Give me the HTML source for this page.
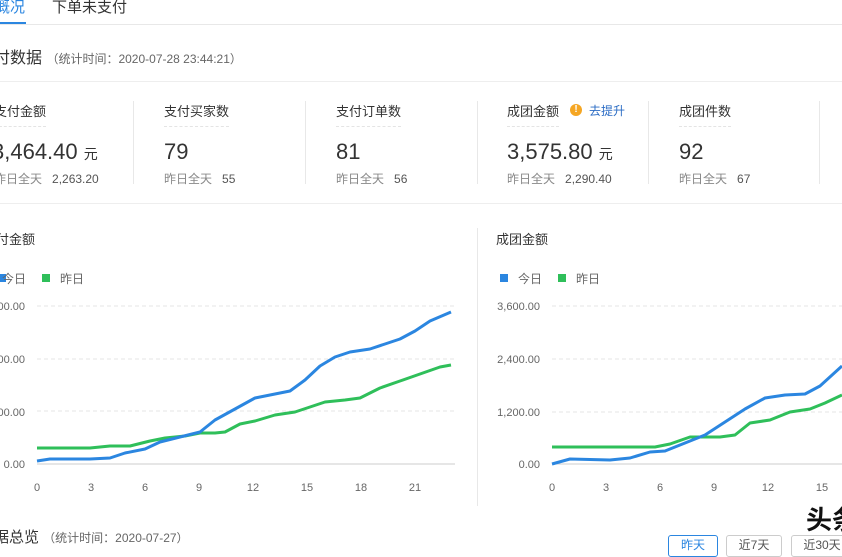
<!DOCTYPE html>
<html><head><meta charset="utf-8"><style>
body{margin:0;width:842px;height:547px;overflow:hidden;background:#fff;font-family:"Liberation Sans","Noto Sans CJK SC",sans-serif;color:#333;position:relative}
.a{position:absolute;white-space:nowrap}
.lbl{font-size:13px;color:#333;border-bottom:1px dashed #e4e4e4;padding-bottom:6px}
.num{font-size:22px;color:#333}
.y{font-size:12px;color:#888}
.vd{position:absolute;width:1px;background:#e8e8e8;top:101px;height:83px}
.btn{position:absolute;top:535px;height:20px;border:1px solid #ccc;border-radius:3px;font-size:12px;text-align:center;line-height:18px;color:#555}
</style></head><body>
<div class="a" style="left:-5px;top:-4px;font-size:15px;color:#2b86e0">概况</div>
<div class="a" style="left:0;top:22px;width:26px;height:2px;background:#2b86e0"></div>
<div class="a" style="left:52px;top:-4px;font-size:15px;color:#333">下单未支付</div>
<div class="a" style="left:0;top:24px;width:842px;height:1px;background:#e8e8e8"></div>
<div class="a" style="left:-6px;top:44px;font-size:16px">付数据 <span style="font-size:12px;color:#666">（统计时间：2020-07-28 23:44:21）</span></div>
<div class="a" style="left:0;top:81px;width:842px;height:1px;background:#eee"></div>

<div class="a lbl" style="left:-6px;top:101px">支付金额</div>
<div class="a num" style="left:-8px;top:139px">3,464.40 <span style="font-size:14px">元</span></div>
<div class="a y" style="left:-6px;top:170px">昨日全天 &nbsp; <span style="color:#555">2,263.20</span></div>
<div class="vd" style="left:133px"></div>
<div class="a lbl" style="left:164px;top:101px">支付买家数</div>
<div class="a num" style="left:164px;top:139px">79</div>
<div class="a y" style="left:164px;top:170px">昨日全天 &nbsp; <span style="color:#555">55</span></div>
<div class="vd" style="left:305px"></div>
<div class="a lbl" style="left:336px;top:101px">支付订单数</div>
<div class="a num" style="left:336px;top:139px">81</div>
<div class="a y" style="left:336px;top:170px">昨日全天 &nbsp; <span style="color:#555">56</span></div>
<div class="vd" style="left:477px"></div>
<div class="a lbl" style="left:507px;top:101px">成团金额</div>
<div class="a" style="left:570px;top:104px;width:12px;height:12px;border-radius:50%;background:#f5a623;color:#fff;font-size:10px;text-align:center;line-height:12px;font-weight:bold">!</div>
<div class="a" style="left:589px;top:102px;font-size:12px;color:#2b6cc4">去提升</div>
<div class="a num" style="left:507px;top:139px">3,575.80 <span style="font-size:14px">元</span></div>
<div class="a y" style="left:507px;top:170px">昨日全天 &nbsp; <span style="color:#555">2,290.40</span></div>
<div class="vd" style="left:648px"></div>
<div class="a lbl" style="left:679px;top:101px">成团件数</div>
<div class="a num" style="left:679px;top:139px">92</div>
<div class="a y" style="left:679px;top:170px">昨日全天 &nbsp; <span style="color:#555">67</span></div>
<div class="vd" style="left:819px"></div>
<div class="a" style="left:0;top:203px;width:842px;height:1px;background:#eee"></div>

<div class="a" style="left:-4px;top:229px;font-size:13px">付金额</div>
<div class="a" style="left:496px;top:229px;font-size:13px">成团金额</div>
<div class="a" style="left:477px;top:228px;width:1px;height:278px;background:#e8e8e8"></div>

<svg class="a" style="left:0;top:0" width="842" height="547">
<g font-family="Liberation Sans" font-size="11" fill="#666">
<rect x="-2" y="274" width="8" height="8" fill="#2b86e0"/><text x="2" y="283" font-family="Noto Sans CJK SC" font-size="12">今日</text>
<rect x="42" y="274" width="8" height="8" fill="#2fbf5a"/><text x="60" y="283" font-family="Noto Sans CJK SC" font-size="12">昨日</text>
<rect x="500" y="274" width="8" height="8" fill="#2b86e0"/><text x="518" y="283" font-family="Noto Sans CJK SC" font-size="12">今日</text>
<rect x="558" y="274" width="8" height="8" fill="#2fbf5a"/><text x="576" y="283" font-family="Noto Sans CJK SC" font-size="12">昨日</text>
<g stroke="#e6e6e6" stroke-dasharray="4,3"><line x1="37" y1="306" x2="455" y2="306"/><line x1="37" y1="359" x2="455" y2="359"/><line x1="37" y1="411" x2="455" y2="411"/>
<line x1="552" y1="306" x2="842" y2="306"/><line x1="552" y1="359" x2="842" y2="359"/><line x1="552" y1="412" x2="842" y2="412"/></g>
<line x1="37" y1="464" x2="455" y2="464" stroke="#ccc"/><line x1="552" y1="464" x2="842" y2="464" stroke="#ccc"/>
<text x="25" y="468" text-anchor="end">0.00</text><text x="25" y="416" text-anchor="end">00.00</text><text x="25" y="363" text-anchor="end">00.00</text><text x="25" y="310" text-anchor="end">00.00</text>
<text x="540" y="468" text-anchor="end">0.00</text><text x="540" y="416" text-anchor="end">1,200.00</text><text x="540" y="363" text-anchor="end">2,400.00</text><text x="540" y="310" text-anchor="end">3,600.00</text>
<g text-anchor="middle"><text x="37" y="491">0</text><text x="91" y="491">3</text><text x="145" y="491">6</text><text x="199" y="491">9</text><text x="253" y="491">12</text><text x="307" y="491">15</text><text x="361" y="491">18</text><text x="415" y="491">21</text>
<text x="552" y="491">0</text><text x="606" y="491">3</text><text x="660" y="491">6</text><text x="714" y="491">9</text><text x="768" y="491">12</text><text x="822" y="491">15</text></g>
</g>
<g fill="none" stroke-width="3" stroke-linejoin="round">
<polyline stroke="#2fbf5a" points="37,448 90,448 110,446 130,446 150,441 165,438 185,436 200,433 215,433 225,432 240,424 255,421 275,415 295,412 310,407 325,402 345,400 360,398 380,388 400,381 420,374 440,367 451,365"/>
<polyline stroke="#2b86e0" points="37,461 50,459 90,459 110,458 125,453 145,449 160,442 180,437 200,432 215,420 235,409 255,398 270,395 290,391 305,380 320,366 335,357 350,352 370,349 385,344 400,339 415,331 430,321 451,312"/>
<polyline stroke="#2fbf5a" points="552,447 655,447 670,444 690,437 720,437 735,435 750,423 770,420 790,412 810,409 825,403 842,395"/>
<polyline stroke="#2b86e0" points="552,464 570,459 610,460 630,458 650,452 665,451 685,443 705,435 725,422 745,409 765,398 785,395 805,394 820,386 842,366"/>
</g>
</svg>

<div class="a" style="left:-6px;top:526px;font-size:15px">据总览 <span style="font-size:12px;color:#666">（统计时间：2020-07-27）</span></div>
<div class="a" style="left:806px;top:500px;font-size:26px;font-weight:bold;color:#111">头条</div>
<div class="btn" style="left:668px;width:48px;border-color:#2b86e0;color:#2b86e0">昨天</div>
<div class="btn" style="left:726px;width:54px">近7天</div>
<div class="btn" style="left:791px;width:60px">近30天</div>
</body></html>
